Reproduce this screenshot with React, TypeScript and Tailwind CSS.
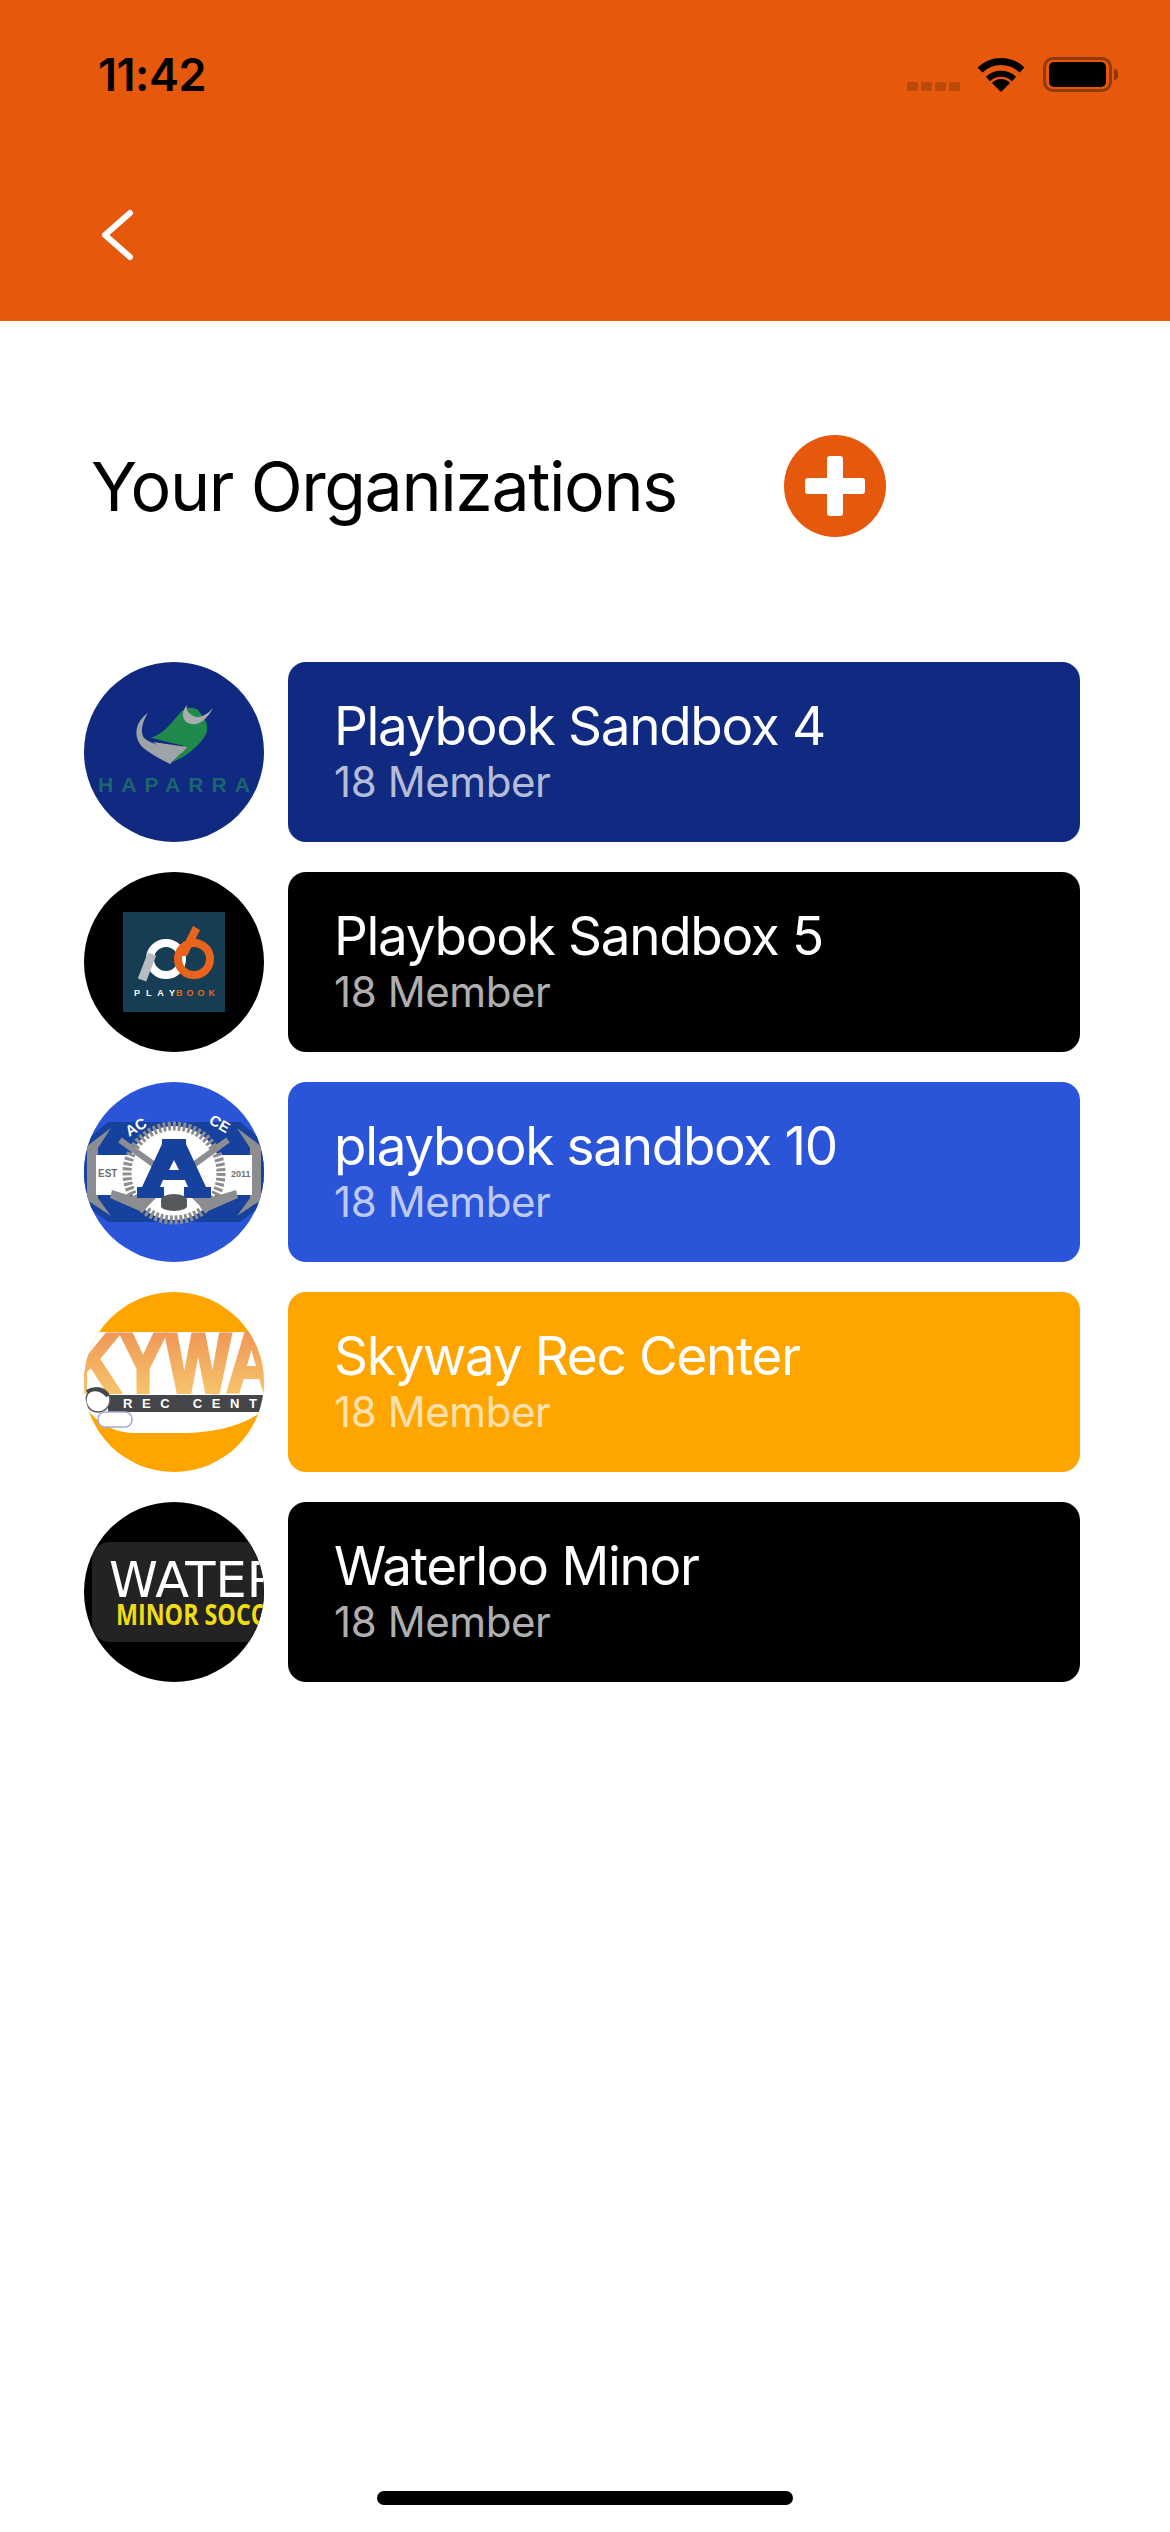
const orgs = [
  { name: "Playbook Sandbox 4", color: "bg-[#0f2a80]", logo: <ChaparralLogo /> },
  { name: "Playbook Sandbox 5", color: "bg-black", logo: <PlaybookLogo /> },
  { name: "playbook sandbox 10", color: "bg-[#2b55d9]", logo: <AcademyLogo /> },
  { name: "Skyway Rec Center", color: "bg-[#ffa500]", logo: <SkywayLogo /> },
  { name: "Waterloo Minor", color: "bg-black", logo: <WaterlooLogo /> },
];

function ChaparralLogo() {
  return (
    <svg viewBox="0 0 180 180" className="h-full w-full">
      <rect width="180" height="180" fill="#0f2a80" />
      <path d="M66 76 C80 72 88 60 96 51 C100 46 108 44 114 48 C120 56 124 60 123 68 C122 78 104 94 89 100 L100 84 L68 76 Z" fill="#1f8a4c" />
      <path d="M64 51 C50 60 48 78 62 88 C72 95 80 99 86 102 L103 85 C90 88 70 84 60 76 C56 70 58 60 64 51 Z" fill="#9ea3a8" />
      <path d="M69 80 L103 85 L98 91 C88 90 76 86 69 80 Z" fill="#9ea3a8" />
      <path d="M103 43 C97 50 98 58 104 61 C114 66 124 56 129 46 C122 54 114 57 109 54 C104 51 102 48 103 43 Z" fill="#a9adb1" />
      <text x="90" y="130" textAnchor="middle" textLength="152" fontSize="21" fontWeight="700" fontFamily="'Liberation Sans', sans-serif" fill="#1d6470">HAPARRA</text>
    </svg>
  );
}

function PlaybookLogo() {
  return (
    <svg viewBox="0 0 180 180" className="h-full w-full">
      <rect width="180" height="180" fill="#000" />
      <rect x="39" y="40" width="102" height="100" fill="#163d53" />
      <circle cx="82" cy="87" r="16" fill="none" stroke="#fff" strokeWidth="8" />
      <path d="M58 108 L68 82" stroke="#b7bcc0" strokeWidth="9" />
      <circle cx="110" cy="87" r="16" fill="none" stroke="#e8641c" strokeWidth="8" />
      <path d="M94 84 L109 54 L116 58 L103 84 Z" fill="#e8641c" />
      <text x="50" y="124" textLength="41" fontSize="9" fontWeight="700" fontFamily="'Liberation Sans', sans-serif" fill="#fff">PLAY</text>
      <text x="92" y="124" textLength="39" fontSize="9" fontWeight="700" fontFamily="'Liberation Sans', sans-serif" fill="#e8641c">BOOK</text>
    </svg>
  );
}

function AcademyLogo() {
  return (
    <svg viewBox="0 0 180 180" className="h-full w-full">
      <rect width="180" height="180" fill="#2b55d9" />
      <path d="M24 40 H156 L180 60 V122 L156 140 H24 L0 122 V60 Z" fill="#16419c" />
      <path d="M27 46 L3 64 V118 L27 134 L14 116 V66 Z" fill="#8b8d90" />
      <path d="M153 46 L177 64 V118 L153 134 L166 116 V66 Z" fill="#8b8d90" />
      <rect x="12" y="73" width="156" height="40" fill="#fff" />
      <circle cx="90" cy="91" r="47" fill="#fff" stroke="#8b8d90" strokeWidth="9" strokeDasharray="3 2" />
      <path d="M36 58 L72 84 M144 58 L108 84" stroke="#8b8d90" strokeWidth="6" />
      <path d="M26 116 L58 130 L72 116 L62 111 L54 116 L28 108 Z" fill="#8b8d90" />
      <path d="M154 116 L122 130 L108 116 L118 111 L126 116 L152 108 Z" fill="#8b8d90" />
      <path d="M78 57 H102 V62 L122 105 H127 V116 H100 V105 H104 L101 98 H79 L76 105 H80 V116 H53 V105 H58 L78 62 Z" fill="#16419c" />
      <path d="M90 78 L85 88 H95 Z" fill="#fff" />
      <ellipse cx="90" cy="118" rx="13" ry="6" fill="#55585c" />
      <rect x="77" y="118" width="26" height="6" fill="#55585c" />
      <ellipse cx="90" cy="124" rx="13" ry="5" fill="#55585c" />
      <text x="14" y="95" fontSize="10" fontWeight="700" fontFamily="'Liberation Sans', sans-serif" fill="#6d7075">EST</text>
      <text x="147" y="95" fontSize="9" fontWeight="700" fontFamily="'Liberation Sans', sans-serif" fill="#6d7075">2011</text>
      <text x="45" y="55" fontSize="15" fontWeight="700" fontFamily="'Liberation Sans', sans-serif" fill="#fff" transform="rotate(-30 45 55)">AC</text>
      <text x="124" y="41" fontSize="15" fontWeight="700" fontFamily="'Liberation Sans', sans-serif" fill="#fff" transform="rotate(30 124 41)">CE</text>
    </svg>
  );
}

function SkywayLogo() {
  return (
    <svg viewBox="0 0 180 180" className="h-full w-full">
      <defs>
        <linearGradient id="skyway-fade" x1="0" y1="0" x2="0" y2="1">
          <stop offset="0" stopColor="#ee8c52" />
          <stop offset="1" stopColor="#f7cf70" />
        </linearGradient>
      </defs>
      <rect width="180" height="180" fill="#ffa500" />
      <path d="M0 40 H180 V118 C160 134 130 141 100 141 H50 C30 141 10 130 0 112 Z" fill="#fff" />
      <text x="-13" y="100" textLength="205" lengthAdjust="spacingAndGlyphs" fontSize="84" fontWeight="700" fontFamily="'Liberation Sans', sans-serif" fill="url(#skyway-fade)" stroke="url(#skyway-fade)" strokeWidth="4">KYWA</text>
      <rect x="24" y="103" width="156" height="17" fill="#45464a" />
      <text x="39" y="116" textLength="134" fontSize="13" fontWeight="700" fontFamily="'Liberation Sans', sans-serif" fill="#fff">REC CENT</text>
      <circle cx="14" cy="108" r="12" fill="#fff" stroke="#55585c" strokeWidth="1.5" />
      <path d="M3 100 C10 95 18 97 24 104" fill="none" stroke="#45464a" strokeWidth="4" />
      <rect x="14" y="120" width="34" height="15" rx="7" fill="#fff" stroke="#a7a9dc" strokeWidth="1.5" />
    </svg>
  );
}

function WaterlooLogo() {
  return (
    <svg viewBox="0 0 180 180" className="h-full w-full">
      <rect width="180" height="180" fill="#000" />
      <rect x="8" y="40" width="200" height="100" rx="18" fill="#232323" />
      <text x="25" y="95" textLength="172" lengthAdjust="spacingAndGlyphs" fontSize="50" fontFamily="'DejaVu Sans', sans-serif" fill="#fff">WATER</text>
      <text x="32" y="123" textLength="178" lengthAdjust="spacingAndGlyphs" fontSize="28" fontWeight="700" fontFamily="'Open Sans', sans-serif" fill="#efdc13">MINOR SOCCER</text>
    </svg>
  );
}

function StatusIcons() {
  return (
    <div className="flex items-end">
      <div className="mb-[1px] mr-[17px] flex gap-[3px]">
        <span className="h-[9px] w-[11px] rounded-[2px] bg-[#b84a0a]" />
        <span className="h-[9px] w-[11px] rounded-[2px] bg-[#b84a0a]" />
        <span className="h-[9px] w-[11px] rounded-[2px] bg-[#b84a0a]" />
        <span className="h-[9px] w-[11px] rounded-[2px] bg-[#b84a0a]" />
      </div>
      <svg viewBox="0 0 48 35" className="h-[35px] w-[48px]">
        <path d="M3 13 A30 30 0 0 1 45 13" fill="none" stroke="#000" strokeWidth="7" />
        <path d="M11 22 A19 19 0 0 1 37 22" fill="none" stroke="#000" strokeWidth="6" />
        <path d="M24 35 L15 26 A12 12 0 0 1 33 26 Z" fill="#000" />
      </svg>
      <div className="ml-[18px] flex items-center">
        <div className="flex h-[35px] w-[69px] items-center justify-center rounded-[10px] border-[3px] border-[#8f3a08]">
          <div className="h-[25px] w-[57px] rounded-[5px] bg-black" />
        </div>
        <div className="ml-[2px] h-[11px] w-[4px] rounded-r-full bg-[#8f3a08]" />
      </div>
    </div>
  );
}

function OrgRow({ name, color, logo }: { name: string; color: string; logo: React.ReactNode }) {
  return (
    <div className="flex gap-6">
      <div className="h-[180px] w-[180px] shrink-0 overflow-hidden rounded-full">{logo}</div>
      <div className={`h-[180px] flex-1 rounded-[18px] pl-[46px] pt-[32px] text-white ${color}`}>
        <p className="text-[53px] leading-[64px] tracking-[-1.3px]">{name}</p>
        <p className="text-[42px] leading-[48px] tracking-[-0.4px] text-white/70">18 Member</p>
      </div>
    </div>
  );
}

export default function App() {
  return (
    <div className="flex min-h-screen flex-col bg-white font-['Inter',sans-serif] text-black">
      {/* Header */}
      <div className="h-[321px] bg-[#e6580b] px-[98px] pt-[48px]">
        <div className="flex items-center justify-between">
          <span className="text-[45px] font-semibold leading-[54px] tracking-[-0.5px]">11:42</span>
          <div className="-mr-[46px] -translate-y-px">
            <StatusIcons />
          </div>
        </div>
        <svg viewBox="0 0 34 54" className="ml-[2px] mt-[106px] h-[54px] w-[34px]">
          <path d="M30 5 L5 27 L30 49" fill="none" stroke="#fff" strokeWidth="6" strokeLinecap="round" strokeLinejoin="round" />
        </svg>
      </div>

      {/* Title */}
      <div className="flex items-center pl-[91px] pt-[114px]">
        <h1 className="w-[693px] text-[68px] font-normal leading-[102px] tracking-[-1.4px]">Your Organizations</h1>
        <div className="flex h-[102px] w-[102px] items-center justify-center rounded-full bg-[#e6580b]">
          <svg viewBox="0 0 60 60" className="h-[60px] w-[60px]">
            <path d="M22 3 Q22 0 25 0 H35 Q38 0 38 3 V22 H57 Q60 22 60 25 V35 Q60 38 57 38 H38 V57 Q38 60 35 60 H25 Q22 60 22 57 V38 H3 Q0 38 0 35 V25 Q0 22 3 22 H22 Z" fill="#fff" />
          </svg>
        </div>
      </div>

      {/* Organizations */}
      <div className="flex flex-col gap-[30px] pl-[84px] pr-[90px] pt-[125px]">
        {orgs.map((org) => (
          <OrgRow key={org.name} {...org} />
        ))}
      </div>

      <div className="mb-[27px] mt-auto flex justify-center">
        <div className="h-[14px] w-[416px] rounded-full bg-black" />
      </div>
    </div>
  );
}
